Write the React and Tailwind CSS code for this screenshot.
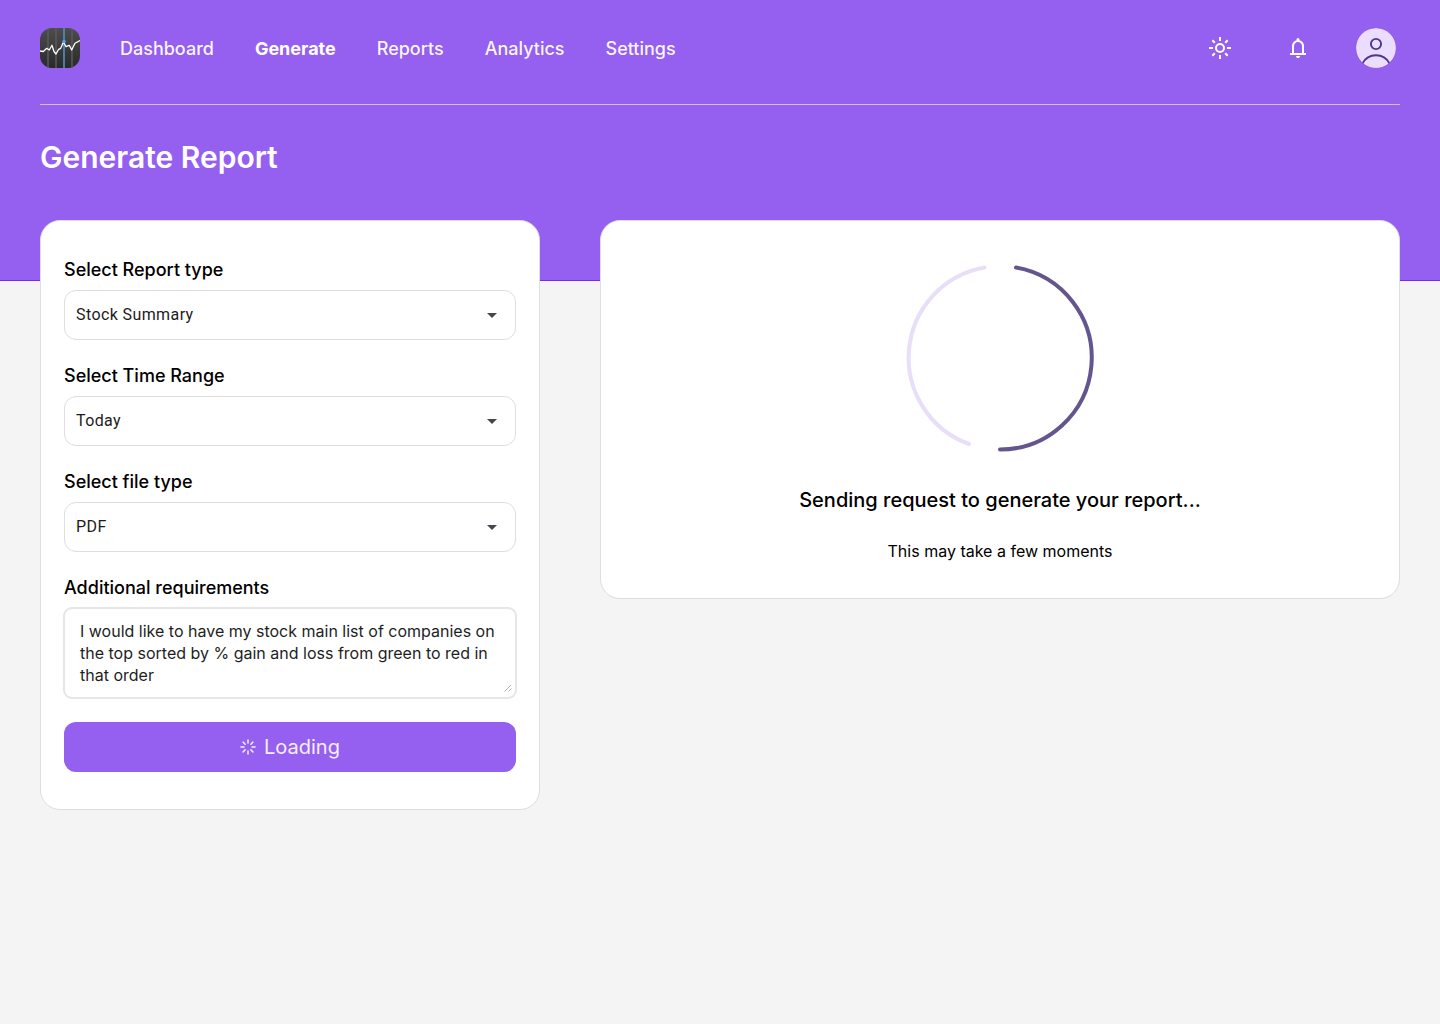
import React from "react";

const navItems = ["Dashboard", "Generate", "Reports", "Analytics", "Settings"];

const fields = [
  { id: "report-type", label: "Select Report type", options: ["Stock Summary", "Portfolio Summary"] },
  { id: "time-range", label: "Select Time Range", options: ["Today", "This week", "This month"] },
  { id: "file-type", label: "Select file type", options: ["PDF", "CSV"] },
];

function Logo() {
  return (
    <svg className="size-10" viewBox="0 0 40 40" role="img" aria-label="Home">
      <defs>
        <linearGradient id="logo-bg" x1="0" y1="0" x2="0" y2="1">
          <stop offset="0" stopColor="#4d4d4d" />
          <stop offset="1" stopColor="#292929" />
        </linearGradient>
        <clipPath id="logo-clip">
          <rect width="40" height="40" rx="12" />
        </clipPath>
      </defs>
      <g clipPath="url(#logo-clip)">
        <rect width="40" height="40" fill="url(#logo-bg)" />
        <path d="M8 0v40M16 0v40M32 0v40" stroke="#5a5a5a" strokeWidth="1.5" />
        <path d="M24 0v40" stroke="#4c87b3" strokeWidth="1.8" />
        <path
          d="M0 23L3.300 23.500L6.700 20.300L9.300 22L12 17.300L14 23.500L16 26L18.700 21.300L20.700 20.300L23.500 14L26 18.700L29.300 17.300L31.700 22L35 15.300L40 12.500"
          fill="none"
          stroke="#fff"
          strokeWidth="1.300"
          strokeLinejoin="round"
        />
        <circle cx="24" cy="13.500" r="1.800" fill="#4aa3f5" />
      </g>
    </svg>
  );
}

function SunIcon() {
  return (
    <svg className="size-6" viewBox="0 0 24 24" fill="none" stroke="currentColor" strokeWidth="2" aria-hidden="true">
      <circle cx="12" cy="12" r="4" />
      <path d="M12 1v4M12 19v4M1 12h4M19 12h4M4.300 4.300l2.500 2.500M17.200 17.200l2.500 2.500M4.300 19.700l2.500-2.500M17.200 6.800l2.500-2.500" />
    </svg>
  );
}

function BellIcon() {
  return (
    <svg className="size-6" viewBox="0 0 24 24" fill="currentColor" aria-hidden="true">
      <path d="M4 19v-2h2v-7q0-2.075 1.250-3.688T10.500 4.200v-.7q0-.625.438-1.062T12 2t1.063.438T13.500 3.500v.7q2 .5 3.250 2.113T18 10v7h2v2zm8 3q-.825 0-1.412-.587T10 20h4q0 .825-.587 1.413T12 22m-4-5h8v-7q0-1.650-1.175-2.825T12 6T9.175 7.175T8 10z" />
    </svg>
  );
}

function Avatar() {
  return (
    <svg className="size-10 rounded-full" viewBox="0 0 40 40" fill="none" aria-hidden="true">
      <circle cx="20" cy="20" r="20" fill="#eaddff" />
      <circle cx="20" cy="16" r="5.100" stroke="#4f378a" strokeWidth="1.900" />
      <path d="M6.500 35.500A15.200 15.200 0 0 1 33.500 35.500" stroke="#4f378a" strokeWidth="1.900" />
    </svg>
  );
}

function Header() {
  return (
    <header className="border-b border-violet-600 bg-[#955ff0] px-10 pb-[103px] text-white">
      <div className="flex items-center border-b border-[#d3bfef] pt-7 pb-9">
        <Logo />
        <nav className="ml-10 flex gap-[41px] pt-0.5 text-lg">
          {navItems.map((item) => (
            <a key={item} href="#" className={item === "Generate" ? "font-bold" : "font-medium text-white/95"}>
              {item}
            </a>
          ))}
        </nav>
        <div className="mr-1 ml-auto flex items-center">
          <button type="button" aria-label="Toggle theme" className="mr-[54px]"><SunIcon /></button>
          <button type="button" aria-label="Notifications" className="mr-[46px]"><BellIcon /></button>
          <button type="button" aria-label="Account"><Avatar /></button>
        </div>
      </div>
      <h1 className="mt-8 text-3xl leading-10 font-semibold">Generate Report</h1>
    </header>
  );
}

function SelectField({ id, label, options }) {
  return (
    <div className="mb-6">
      <label htmlFor={id} className="mb-2 block text-lg leading-6 font-medium text-black">{label}</label>
      <div className="grid items-center">
        <select
          id={id}
          className="col-start-1 row-start-1 h-[50px] w-full appearance-none rounded-xl border border-[#dedede] bg-white px-[11px] font-[Roboto,sans-serif] text-base tracking-wide text-[#1d1b20]"
        >
          {options.map((option) => (
            <option key={option}>{option}</option>
          ))}
        </select>
        <svg
          className="pointer-events-none col-start-1 row-start-1 mr-3 size-6 justify-self-end"
          viewBox="0 0 24 24"
          fill="#49454f"
          aria-hidden="true"
        >
          <path d="M7 10l5 5 5-5z" />
        </svg>
      </div>
    </div>
  );
}

function ButtonSpinner() {
  return (
    <svg className="size-4" viewBox="0 0 16 16" stroke="currentColor" strokeWidth="1.500" strokeLinecap="round" aria-hidden="true">
      <path d="M8 1v3M8 12v3M1 8h3M12 8h3M3.050 3.050l2.120 2.120M10.830 10.830l2.120 2.120M3.050 12.950l2.120-2.120M10.830 5.170l2.120-2.120" />
    </svg>
  );
}

function ReportForm() {
  return (
    <form className="w-[500px] shrink-0 rounded-[20px] border border-[#dedede] bg-white px-[23px] pt-[37px] pb-[37px]">
      {fields.map((field) => (
        <SelectField key={field.id} {...field} />
      ))}
      <label htmlFor="requirements" className="mb-2 block text-lg leading-6 font-medium text-black">
        Additional requirements
      </label>
      <div className="grid">
        <textarea
          id="requirements"
          rows={3}
          className="col-start-1 row-start-1 block w-full resize-none rounded-lg border border-[#e6e6e6] bg-white px-[15px] py-[11px] text-base leading-[22px] text-[#1e1e1e] ring-1 ring-[#e6e6e6]"
          defaultValue="I would like to have my stock main list of companies on the top sorted by % gain and loss from green to red in that order"
        />
        <svg
          className="pointer-events-none col-start-1 row-start-1 mr-1 mb-1.5 size-2 self-end justify-self-end"
          viewBox="0 0 8 8"
          stroke="#b3b3b3"
          aria-hidden="true"
        >
          <path d="M.5 7.500L7 1M4.500 7.500L7.500 4.500" />
        </svg>
      </div>
      <button
        type="button"
        className="mt-6 flex h-[50px] w-full items-center justify-center gap-2 rounded-xl bg-[#955ff0] text-xl text-white/90"
      >
        <ButtonSpinner />
        Loading
      </button>
    </form>
  );
}

function ProgressCard() {
  return (
    <section className="flex flex-1 flex-col items-center rounded-[20px] border border-[#dedede] bg-white px-6 pt-[37px] pb-[35px] text-black">
      <svg
        className="size-50"
        viewBox="0 0 200 200"
        fill="none"
        strokeWidth="4"
        strokeLinecap="round"
        role="img"
        aria-label="In progress"
      >
        <path d="M116 9.500A91.700 91.700 0 0 1 100 191.500" stroke="#65558f" />
        <path d="M84.500 9.500A91.700 91.700 0 0 0 69 186" stroke="#e8def8" />
      </svg>
      <h2 className="mt-7 text-xl leading-7 font-medium">Sending request to generate your report...</h2>
      <p className="mt-[25px] text-base leading-6">This may take a few moments</p>
    </section>
  );
}

export default function App() {
  return (
    <div className="min-h-screen bg-[#f4f4f4] font-[Inter,sans-serif]">
      <Header />
      <main className="-mt-[61px] flex items-start gap-15 px-10">
        <ReportForm />
        <ProgressCard />
      </main>
    </div>
  );
}
